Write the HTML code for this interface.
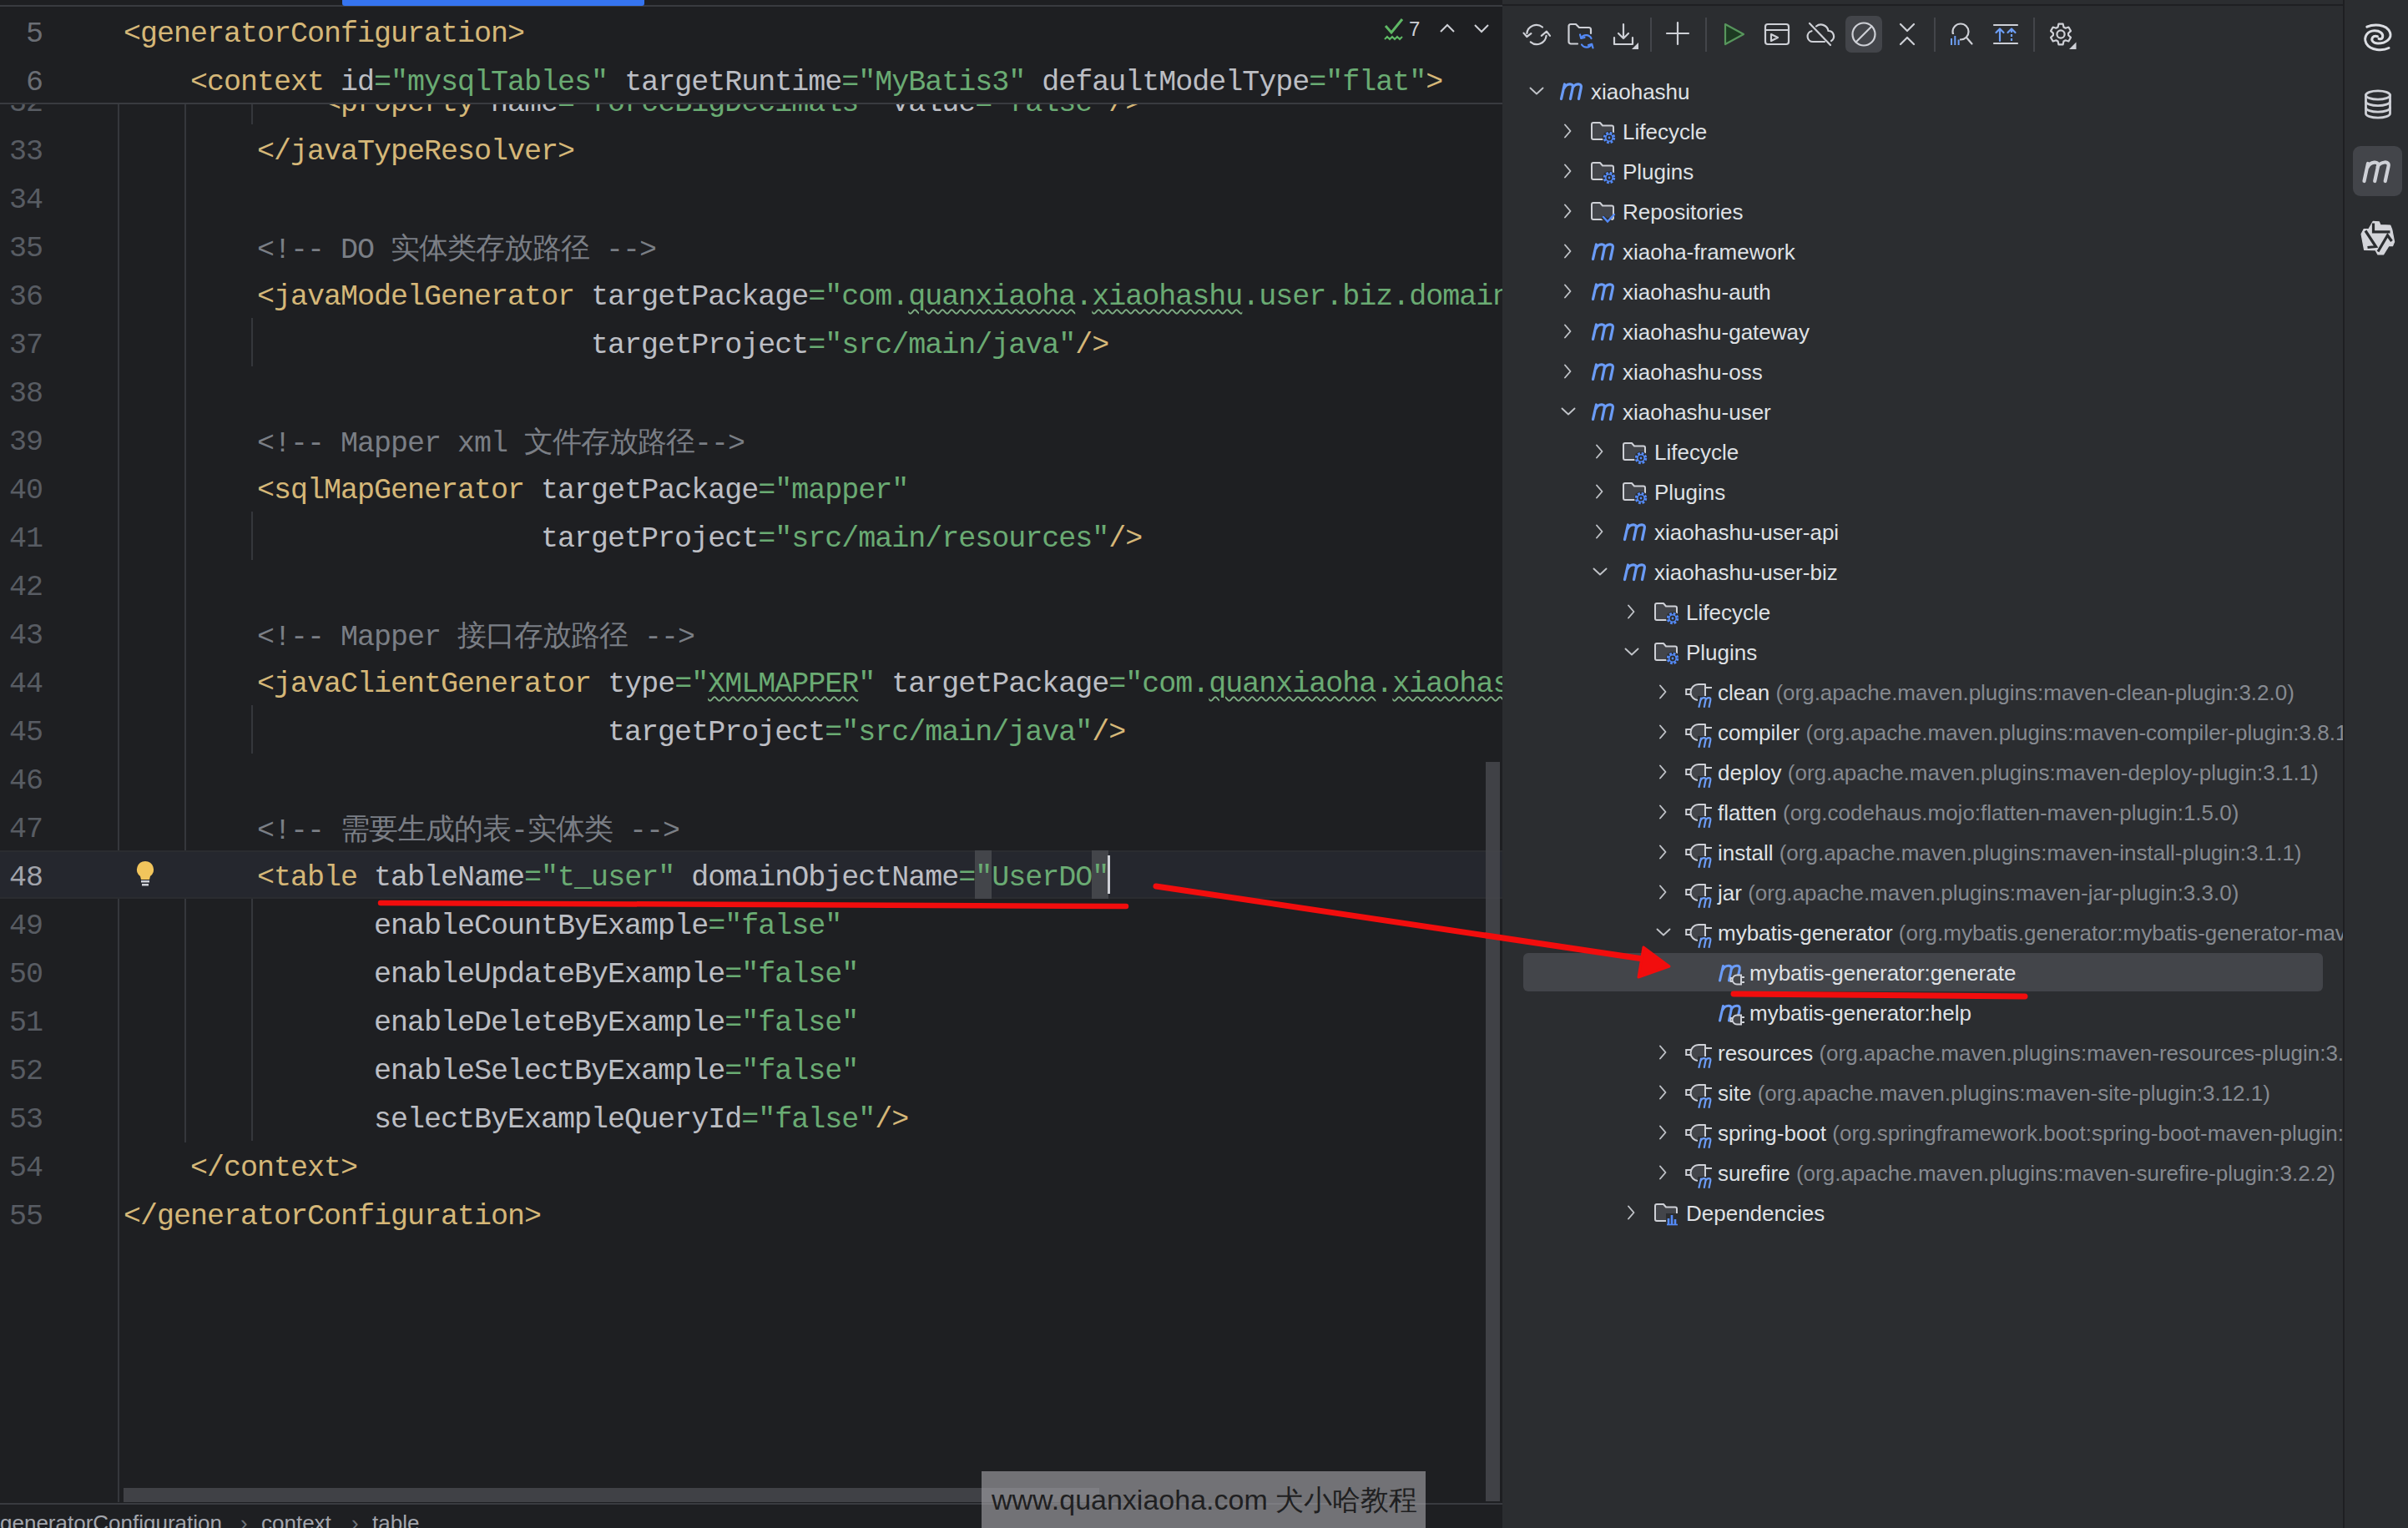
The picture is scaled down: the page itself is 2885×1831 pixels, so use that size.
<!DOCTYPE html>
<html><head><meta charset="utf-8"><style>
*{box-sizing:border-box}
html,body{margin:0;padding:0}
body{width:2885px;height:1831px;position:relative;overflow:hidden;background:#1e1f22;font-family:"Liberation Sans",sans-serif}
.abs{position:absolute}
.ln{position:absolute;left:0;width:1800px;height:58px;line-height:58px;font-family:"Liberation Mono",monospace;font-size:35px;letter-spacing:-1px;white-space:pre;color:#bcbec4}
.ln .code{position:absolute;left:148px;top:4px}
.ln .num{position:absolute;right:1749px;top:4px;color:#585c63;text-align:right}
.cjk{font-family:"Liberation Serif",serif}
.t{color:#d5b778} .a{color:#bcbec4} .v{color:#6aab73} .c{color:#7a7e85}
u{text-decoration:underline wavy #7fae84;text-decoration-thickness:1.5px;text-underline-offset:5px}
.guide{position:absolute;width:2px;background:#35373c}
.row{position:absolute;height:48px;line-height:48px;font-size:26px;color:#dfe1e5;white-space:nowrap}
.row .g{color:#868a91}
.chev{position:absolute}
</style></head>
<body>
<div class="abs" style="left:0;top:0;width:1800px;height:7px;background:#1e1f22"></div>
<div class="abs" style="left:0;top:6px;width:1800px;height:2px;background:#393b40"></div>
<div class="abs" style="left:410px;top:0;width:362px;height:7px;background:#3574f0;border-radius:0 0 3px 3px"></div>
<div class="guide" style="left:141px;top:124px;height:1676px"></div>
<div class="guide" style="left:221px;top:124px;height:1245px"></div>
<div class="guide" style="left:301px;top:124px;height:25px"></div>
<div class="guide" style="left:301px;top:381px;height:58px"></div>
<div class="guide" style="left:301px;top:613px;height:58px"></div>
<div class="guide" style="left:301px;top:845px;height:58px"></div>
<div class="guide" style="left:301px;top:1077px;height:290px"></div>
<div class="abs" style="left:0;top:1019px;width:1800px;height:58px;background:#25272e;border-top:2px solid #2a2c30;border-bottom:2px solid #2a2c30"></div>
<div class="abs" style="left:1168px;top:1019px;width:20px;height:58px;background:#43454a"></div>
<div class="abs" style="left:1308px;top:1019px;width:20px;height:58px;background:#43454a"></div>
<div class="ln" style="top:91px"><span class="num" style="color:#585c63">32</span><span class="code">            <span class="t">&lt;property</span> <span class="a">name</span><span class="v">="forceBigDecimals"</span> <span class="a">value</span><span class="v">="false"</span><span class="t">/&gt;</span></span></div>
<div class="ln" style="top:149px"><span class="num" style="color:#585c63">33</span><span class="code">        <span class="t">&lt;/javaTypeResolver</span><span class="t">&gt;</span></span></div>
<div class="ln" style="top:207px"><span class="num" style="color:#585c63">34</span><span class="code"></span></div>
<div class="ln" style="top:265px"><span class="num" style="color:#585c63">35</span><span class="code">        <span class="c">&lt;!-- DO <span class="cjk">实体类存放路径</span> --&gt;</span></span></div>
<div class="ln" style="top:323px"><span class="num" style="color:#585c63">36</span><span class="code">        <span class="t">&lt;javaModelGenerator</span> <span class="a">targetPackage</span><span class="v">="com.<u>quanxiaoha</u>.<u>xiaohashu</u>.user.biz.domain.dataobject"</span></span></div>
<div class="ln" style="top:381px"><span class="num" style="color:#585c63">37</span><span class="code">                            <span class="a">targetProject</span><span class="v">="src/main/java"</span><span class="t">/&gt;</span></span></div>
<div class="ln" style="top:439px"><span class="num" style="color:#585c63">38</span><span class="code"></span></div>
<div class="ln" style="top:497px"><span class="num" style="color:#585c63">39</span><span class="code">        <span class="c">&lt;!-- Mapper xml <span class="cjk">文件存放路径</span>--&gt;</span></span></div>
<div class="ln" style="top:555px"><span class="num" style="color:#585c63">40</span><span class="code">        <span class="t">&lt;sqlMapGenerator</span> <span class="a">targetPackage</span><span class="v">="mapper"</span></span></div>
<div class="ln" style="top:613px"><span class="num" style="color:#585c63">41</span><span class="code">                         <span class="a">targetProject</span><span class="v">="src/main/resources"</span><span class="t">/&gt;</span></span></div>
<div class="ln" style="top:671px"><span class="num" style="color:#585c63">42</span><span class="code"></span></div>
<div class="ln" style="top:729px"><span class="num" style="color:#585c63">43</span><span class="code">        <span class="c">&lt;!-- Mapper <span class="cjk">接口存放路径</span> --&gt;</span></span></div>
<div class="ln" style="top:787px"><span class="num" style="color:#585c63">44</span><span class="code">        <span class="t">&lt;javaClientGenerator</span> <span class="a">type</span><span class="v">="<u>XMLMAPPER</u>"</span> <span class="a">targetPackage</span><span class="v">="com.<u>quanxiaoha</u>.<u>xiaohashu</u>.user.biz.domain.mapper"</span></span></div>
<div class="ln" style="top:845px"><span class="num" style="color:#585c63">45</span><span class="code">                             <span class="a">targetProject</span><span class="v">="src/main/java"</span><span class="t">/&gt;</span></span></div>
<div class="ln" style="top:903px"><span class="num" style="color:#585c63">46</span><span class="code"></span></div>
<div class="ln" style="top:961px"><span class="num" style="color:#585c63">47</span><span class="code">        <span class="c">&lt;!-- <span class="cjk">需要生成的表</span>-<span class="cjk">实体类</span> --&gt;</span></span></div>
<div class="ln" style="top:1019px"><span class="num" style="color:#a1a3ab">48</span><span class="code">        <span class="t">&lt;table</span> <span class="a">tableName</span><span class="v">="t_user"</span> <span class="a">domainObjectName</span><span class="v">="UserDO"</span></span></div>
<div class="ln" style="top:1077px"><span class="num" style="color:#585c63">49</span><span class="code">               <span class="a">enableCountByExample</span><span class="v">="false"</span></span></div>
<div class="ln" style="top:1135px"><span class="num" style="color:#585c63">50</span><span class="code">               <span class="a">enableUpdateByExample</span><span class="v">="false"</span></span></div>
<div class="ln" style="top:1193px"><span class="num" style="color:#585c63">51</span><span class="code">               <span class="a">enableDeleteByExample</span><span class="v">="false"</span></span></div>
<div class="ln" style="top:1251px"><span class="num" style="color:#585c63">52</span><span class="code">               <span class="a">enableSelectByExample</span><span class="v">="false"</span></span></div>
<div class="ln" style="top:1309px"><span class="num" style="color:#585c63">53</span><span class="code">               <span class="a">selectByExampleQueryId</span><span class="v">="false"</span><span class="t">/&gt;</span></span></div>
<div class="ln" style="top:1367px"><span class="num" style="color:#585c63">54</span><span class="code">    <span class="t">&lt;/context</span><span class="t">&gt;</span></span></div>
<div class="ln" style="top:1425px"><span class="num" style="color:#585c63">55</span><span class="code"><span class="t">&lt;/generatorConfiguration</span><span class="t">&gt;</span></span></div>
<div class="abs" style="left:1327px;top:1025px;width:3px;height:46px;background:#ced0d6"></div>
<svg class="abs" style="left:162px;top:1030px" width="24" height="34" viewBox="0 0 24 34">
<path d="M12 2 a10 10 0 0 1 6 18 l-1 4 h-10 l-1 -4 a10 10 0 0 1 6 -18z" fill="#f2c55c"/>
<rect x="7" y="25" width="10" height="2.5" fill="#ced0d6"/><rect x="8" y="29" width="8" height="2.5" fill="#ced0d6"/></svg>
<div class="abs" style="left:0;top:8px;width:1800px;height:116px;background:#1e1f22"></div>
<div class="abs" style="left:0;top:123px;width:1800px;height:2px;background:#393b40"></div>
<div class="ln" style="top:8px"><span class="num" style="color:#6a6e75">5</span><span class="code"><span class="t">&lt;generatorConfiguration</span><span class="t">&gt;</span></span></div>
<div class="ln" style="top:66px"><span class="num" style="color:#6a6e75">6</span><span class="code">    <span class="t">&lt;context</span> <span class="a">id</span><span class="v">="mysqlTables"</span> <span class="a">targetRuntime</span><span class="v">="MyBatis3"</span> <span class="a">defaultModelType</span><span class="v">="flat"</span><span class="t">&gt;</span></span></div>
<svg class="abs" style="left:1655px;top:18px" width="135" height="36" viewBox="0 0 135 36">
<path d="M5 13 l7 8 l13 -16" stroke="#5fb865" stroke-width="3" fill="none"/>
<path d="M4 29 l3 -3 l3 3 l3 -3 l3 3 l3 -3 l3 3 l3 -3" stroke="#5fb865" stroke-width="2" fill="none"/>
<text x="33" y="25" font-family="Liberation Sans" font-size="24" fill="#ced0d6">7</text>
<path d="M71 20 l8 -8 l8 8" stroke="#ced0d6" stroke-width="2" fill="none"/>
<path d="M112 12 l8 8 l8 -8" stroke="#ced0d6" stroke-width="2" fill="none"/>
</svg>
<div class="abs" style="left:1780px;top:913px;width:17px;height:886px;background:#47484c;opacity:.85"></div>
<div class="abs" style="left:148px;top:1783px;width:1169px;height:17px;background:#47484c;opacity:.85"></div>
<div class="abs" style="left:0;top:1801px;width:1800px;height:2px;background:#393b40"></div>
<div class="abs" style="left:0;top:1803px;width:1800px;height:28px;background:#1e1f22"></div>
<div class="abs" style="left:0;top:1808px;font-size:26px;line-height:34px;color:#a3a6ad;white-space:nowrap">generatorConfiguration<span style="position:absolute;left:288px;color:#6f737a">›</span><span style="position:absolute;left:313px">context</span><span style="position:absolute;left:421px;color:#6f737a">›</span><span style="position:absolute;left:446px">table</span></div>
<div class="abs" style="left:1176px;top:1763px;width:532px;height:68px;background:rgba(160,160,165,0.65)"></div>
<div class="abs" style="left:1188px;top:1775px;font-size:34px;line-height:44px;color:#1f1f21;white-space:nowrap">www.quanxiaoha.com 犬小哈教程</div>
<div class="abs" style="left:1800px;top:0;width:1008px;height:1831px;background:#2b2d30"></div>
<div class="abs" style="left:1800px;top:5px;width:1008px;height:2px;background:#1e1f22"></div>
<div class="abs" style="left:2807px;top:0;width:2px;height:1831px;background:#1e1f22"></div>
<div class="abs" style="left:2809px;top:0;width:76px;height:1831px;background:#2b2d30"></div>
<svg class="abs" style="left:1825px;top:25px;overflow:visible" width="34" height="34" viewBox="0 0 34 34" >
      <path d="M23 7.5 A11.5 11.5 0 0 0 4.3 15" stroke="#ced0d6" stroke-width="2.2" fill="none" stroke-linecap="round" stroke-linejoin="round"/>
      <path d="M0.5 14.6 L4.3 19 L9.4 15.2" stroke="#ced0d6" stroke-width="2.2" fill="none" stroke-linecap="round" stroke-linejoin="round"/>
      <path d="M8.8 25.3 A11.5 11.5 0 0 0 27.6 17.8" stroke="#ced0d6" stroke-width="2.2" fill="none" stroke-linecap="round" stroke-linejoin="round"/>
      <path d="M21.8 17.8 L28 12.6 L32 17.8" stroke="#ced0d6" stroke-width="2.2" fill="none" stroke-linecap="round" stroke-linejoin="round"/></svg><svg class="abs" style="left:1878px;top:25px;overflow:visible" width="36" height="36" viewBox="0 0 36 36" >
      <path d="M12 27.5 H4 A2.5 2.5 0 0 1 1.5 25 V6.5 A2.5 2.5 0 0 1 4 4 H10 L14 8 H25.5 A2.5 2.5 0 0 1 28 10.5 V15" stroke="#ced0d6" stroke-width="2.2" fill="none" stroke-linecap="round" stroke-linejoin="round"/>
      <path d="M28.5 21 A7 7 0 0 0 16.3 20.5" stroke="#548af7" stroke-width="2.2" fill="none" stroke-linecap="round" stroke-linejoin="round"/>
      <path d="M15 16.5 L16.3 21 L20.5 20" stroke="#548af7" stroke-width="2.2" fill="none" stroke-linecap="round" stroke-linejoin="round"/>
      <path d="M17 28.5 A7 7 0 0 0 29 28" stroke="#548af7" stroke-width="2.2" fill="none" stroke-linecap="round" stroke-linejoin="round"/>
      <path d="M30.5 32.5 L29.2 27.8 L25 29" stroke="#548af7" stroke-width="2.2" fill="none" stroke-linecap="round" stroke-linejoin="round"/></svg><svg class="abs" style="left:1930px;top:25px;overflow:visible" width="36" height="36" viewBox="0 0 36 36" >
      <path d="M15 4 V21 M9 15 L15 21 L21 15" stroke="#ced0d6" stroke-width="2.2" fill="none" stroke-linecap="round" stroke-linejoin="round"/>
      <path d="M4 20 V28 H26 V20" stroke="#ced0d6" stroke-width="2.2" fill="none" stroke-linecap="round" stroke-linejoin="round"/>
      <path d="M33 26 V34 H25 Z" fill="#ced0d6"/></svg><div class="abs" style="left:1977px;top:21px;width:2px;height:41px;background:#43454a"></div><div class="abs" style="left:2043px;top:21px;width:2px;height:41px;background:#43454a"></div><div class="abs" style="left:2317px;top:21px;width:2px;height:41px;background:#43454a"></div><div class="abs" style="left:2436px;top:21px;width:2px;height:41px;background:#43454a"></div><svg class="abs" style="left:1996px;top:26px;overflow:visible" width="28" height="28" viewBox="0 0 28 28" ><path d="M14 1 V27 M1 14 H27" stroke="#ced0d6" stroke-width="2.2" fill="none" stroke-linecap="round" stroke-linejoin="round"/></svg><svg class="abs" style="left:2062px;top:25px;overflow:visible" width="32" height="32" viewBox="0 0 32 32" ><path d="M5 4 L27 16 L5 28 Z" stroke="#57965c" stroke-width="2.2" fill="#1d3a22" stroke-linejoin="round"/></svg><svg class="abs" style="left:2113px;top:26px;overflow:visible" width="32" height="30" viewBox="0 0 32 30" >
      <rect x="2" y="3" width="28" height="24" rx="3" stroke="#ced0d6" stroke-width="2.2" fill="none" stroke-linecap="round" stroke-linejoin="round"/>
      <path d="M2 10 H30" stroke="#ced0d6" stroke-width="2.2" fill="none" stroke-linecap="round" stroke-linejoin="round"/>
      <path d="M9 15 L17 19 L9 23 Z" stroke="#ced0d6" stroke-width="2.2" fill="none" stroke-linecap="round" stroke-linejoin="round"/></svg><svg class="abs" style="left:2163px;top:25px;overflow:visible" width="36" height="32" viewBox="0 0 36 32" >
      <path d="M23 25 H9 A6.5 6.5 0 0 1 7.5 12.2 M13 6.5 A9 9 0 0 1 27.5 12 A6.5 6.5 0 0 1 31 24" stroke="#ced0d6" stroke-width="2.2" fill="none" stroke-linecap="round" stroke-linejoin="round"/>
      <path d="M5 3 L30 29" stroke="#ced0d6" stroke-width="2.2" fill="none" stroke-linecap="round" stroke-linejoin="round"/></svg><div class="abs" style="left:2211px;top:19px;width:44px;height:44px;background:#43454a;border-radius:7px"></div><svg class="abs" style="left:2217px;top:25px;overflow:visible" width="32" height="32" viewBox="0 0 32 32" ><circle cx="16" cy="16" r="13.5" stroke="#ced0d6" stroke-width="2.2" fill="none" stroke-linecap="round" stroke-linejoin="round"/><path d="M25.5 6.5 L6.5 25.5" stroke="#ced0d6" stroke-width="2.2" fill="none" stroke-linecap="round" stroke-linejoin="round"/></svg><svg class="abs" style="left:2273px;top:25px;overflow:visible" width="24" height="32" viewBox="0 0 24 32" ><path d="M4 4 L12 12 L20 4 M4 28 L12 20 L20 28" stroke="#ced0d6" stroke-width="2.2" fill="none" stroke-linecap="round" stroke-linejoin="round"/></svg><svg class="abs" style="left:2333px;top:25px;overflow:visible" width="36" height="36" viewBox="0 0 36 36" >
      <circle cx="16" cy="13" r="9.5" stroke="#ced0d6" stroke-width="2.2" fill="none" stroke-linecap="round" stroke-linejoin="round"/>
      <path d="M23 20 L29.5 27.5" stroke="#ced0d6" stroke-width="2.2" fill="none" stroke-linecap="round" stroke-linejoin="round"/>
      <rect x="2" y="16" width="13" height="15" fill="#2b2d30"/>
      <path d="M5 21 V29 M9.3 18 V29 M13.6 22.5 V29" stroke="#6d9ef6" stroke-width="2" fill="none"/></svg><svg class="abs" style="left:2386px;top:25px;overflow:visible" width="36" height="32" viewBox="0 0 36 32" >
      <path d="M3 5 H31 M3 27 H31" stroke="#ced0d6" stroke-width="2.2" fill="none" stroke-linecap="round" stroke-linejoin="round"/>
      <path d="M10 24 V10 M5.5 14 L10 9.5 L14.5 14" stroke="#6d9ef6" stroke-width="2.2" fill="none" stroke-linecap="round" stroke-linejoin="round"/>
      <path d="M24 24 V10" stroke="#6d9ef6" stroke-width="2.2" stroke-dasharray="3 2"/>
      <path d="M19.5 14 L24 9.5 L28.5 14" stroke="#6d9ef6" stroke-width="2.2" fill="none" stroke-linecap="round" stroke-linejoin="round"/></svg><svg class="abs" style="left:2453px;top:25px;overflow:visible" width="40" height="36" viewBox="0 0 40 36" >
      <path d="M13.38 3.68 L18.62 3.68 L19.45 7.47 L21.66 8.75 L25.36 7.57 L27.98 12.11 L25.11 14.72 L25.11 17.28 L27.98 19.89 L25.36 24.43 L21.66 23.25 L19.45 24.53 L18.62 28.32 L13.38 28.32 L12.55 24.53 L10.34 23.25 L6.64 24.43 L4.02 19.89 L6.89 17.28 L6.89 14.72 L4.02 12.11 L6.64 7.57 L10.34 8.75 L12.55 7.47 Z" stroke="#ced0d6" stroke-width="2.2" fill="none" stroke-linecap="round" stroke-linejoin="round"/>
      <circle cx="16" cy="16" r="4.6" stroke="#ced0d6" stroke-width="2.2" fill="none" stroke-linecap="round" stroke-linejoin="round"/>
      <path d="M34.5 25.5 V34 H26 Z" fill="#ced0d6"/></svg><div class="abs" style="left:1825px;top:1142px;width:958px;height:46px;background:#43454a;border-radius:6px"></div><div class="abs" style="left:1800px;top:70px;width:1007px;height:1761px;overflow:hidden"><div style="position:absolute;left:-1800px;top:-70px;width:2885px;height:1831px"><svg class="abs" style="left:1832px;top:103px;overflow:visible" width="18" height="12" viewBox="0 0 18 12" ><path d="M1.5 2.5 L9 9.5 L16.5 2.5" stroke="#c0c3c8" stroke-width="1.9" fill="none" stroke-linecap="round" stroke-linejoin="round"/></svg><svg class="abs" style="left:1868px;top:98px;overflow:visible" width="32" height="22" viewBox="0 0 32 22" ><path d="M2.5 20.5 L6.5 3 M6 7.5 C8.5 2 18 0.5 16.2 7.5 L13.5 20.5 M16 7.5 C18.5 2 28 0.5 26.2 7.5 L23.5 20.5" stroke="#6a9bf6" stroke-width="3.3" fill="none" stroke-linecap="round"/></svg><svg class="abs" style="left:1872px;top:148px;overflow:visible" width="12" height="18" viewBox="0 0 12 18" ><path d="M3 1.5 L9.5 9 L3 16.5" stroke="#c0c3c8" stroke-width="1.9" fill="none" stroke-linecap="round" stroke-linejoin="round"/></svg><svg class="abs" style="left:1906px;top:145px;overflow:visible" width="30" height="28" viewBox="0 0 30 28" ><path d="M3 2 H11 L14 5.5 H25 A2 2 0 0 1 27 7.5 V20 A2 2 0 0 1 25 22 H3 A2 2 0 0 1 1 20 V4 A2 2 0 0 1 3 2 Z" stroke="#ced0d6" stroke-width="2" fill="#43454a" stroke-linejoin="round"/><circle cx="22" cy="20" r="8" fill="#2b2d30"/><circle cx="22" cy="20" r="5.6" stroke="#548af7" stroke-width="3.2" fill="none" stroke-dasharray="2.6 1.8"/><circle cx="22" cy="20" r="4.2" stroke="#548af7" stroke-width="1.6" fill="#2b2d30"/><circle cx="22" cy="20" r="1.4" fill="#548af7"/></svg><svg class="abs" style="left:1872px;top:196px;overflow:visible" width="12" height="18" viewBox="0 0 12 18" ><path d="M3 1.5 L9.5 9 L3 16.5" stroke="#c0c3c8" stroke-width="1.9" fill="none" stroke-linecap="round" stroke-linejoin="round"/></svg><svg class="abs" style="left:1906px;top:193px;overflow:visible" width="30" height="28" viewBox="0 0 30 28" ><path d="M3 2 H11 L14 5.5 H25 A2 2 0 0 1 27 7.5 V20 A2 2 0 0 1 25 22 H3 A2 2 0 0 1 1 20 V4 A2 2 0 0 1 3 2 Z" stroke="#ced0d6" stroke-width="2" fill="#43454a" stroke-linejoin="round"/><circle cx="22" cy="20" r="8" fill="#2b2d30"/><circle cx="22" cy="20" r="5.6" stroke="#548af7" stroke-width="3.2" fill="none" stroke-dasharray="2.6 1.8"/><circle cx="22" cy="20" r="4.2" stroke="#548af7" stroke-width="1.6" fill="#2b2d30"/><circle cx="22" cy="20" r="1.4" fill="#548af7"/></svg><svg class="abs" style="left:1872px;top:244px;overflow:visible" width="12" height="18" viewBox="0 0 12 18" ><path d="M3 1.5 L9.5 9 L3 16.5" stroke="#c0c3c8" stroke-width="1.9" fill="none" stroke-linecap="round" stroke-linejoin="round"/></svg><svg class="abs" style="left:1906px;top:241px;overflow:visible" width="30" height="28" viewBox="0 0 30 28" ><path d="M3 2 H11 L14 5.5 H25 A2 2 0 0 1 27 7.5 V20 A2 2 0 0 1 25 22 H3 A2 2 0 0 1 1 20 V4 A2 2 0 0 1 3 2 Z" stroke="#ced0d6" stroke-width="2" fill="#43454a" stroke-linejoin="round"/><path d="M14 19 L20 24 L23 21" stroke="#2b2d30" stroke-width="5" fill="none"/><path d="M15 19 L20 24.5 L28 16" stroke="#548af7" stroke-width="2.4" fill="none" stroke-linecap="round"/></svg><svg class="abs" style="left:1872px;top:292px;overflow:visible" width="12" height="18" viewBox="0 0 12 18" ><path d="M3 1.5 L9.5 9 L3 16.5" stroke="#c0c3c8" stroke-width="1.9" fill="none" stroke-linecap="round" stroke-linejoin="round"/></svg><svg class="abs" style="left:1906px;top:290px;overflow:visible" width="32" height="22" viewBox="0 0 32 22" ><path d="M2.5 20.5 L6.5 3 M6 7.5 C8.5 2 18 0.5 16.2 7.5 L13.5 20.5 M16 7.5 C18.5 2 28 0.5 26.2 7.5 L23.5 20.5" stroke="#6a9bf6" stroke-width="3.3" fill="none" stroke-linecap="round"/></svg><svg class="abs" style="left:1872px;top:340px;overflow:visible" width="12" height="18" viewBox="0 0 12 18" ><path d="M3 1.5 L9.5 9 L3 16.5" stroke="#c0c3c8" stroke-width="1.9" fill="none" stroke-linecap="round" stroke-linejoin="round"/></svg><svg class="abs" style="left:1906px;top:338px;overflow:visible" width="32" height="22" viewBox="0 0 32 22" ><path d="M2.5 20.5 L6.5 3 M6 7.5 C8.5 2 18 0.5 16.2 7.5 L13.5 20.5 M16 7.5 C18.5 2 28 0.5 26.2 7.5 L23.5 20.5" stroke="#6a9bf6" stroke-width="3.3" fill="none" stroke-linecap="round"/></svg><svg class="abs" style="left:1872px;top:388px;overflow:visible" width="12" height="18" viewBox="0 0 12 18" ><path d="M3 1.5 L9.5 9 L3 16.5" stroke="#c0c3c8" stroke-width="1.9" fill="none" stroke-linecap="round" stroke-linejoin="round"/></svg><svg class="abs" style="left:1906px;top:386px;overflow:visible" width="32" height="22" viewBox="0 0 32 22" ><path d="M2.5 20.5 L6.5 3 M6 7.5 C8.5 2 18 0.5 16.2 7.5 L13.5 20.5 M16 7.5 C18.5 2 28 0.5 26.2 7.5 L23.5 20.5" stroke="#6a9bf6" stroke-width="3.3" fill="none" stroke-linecap="round"/></svg><svg class="abs" style="left:1872px;top:436px;overflow:visible" width="12" height="18" viewBox="0 0 12 18" ><path d="M3 1.5 L9.5 9 L3 16.5" stroke="#c0c3c8" stroke-width="1.9" fill="none" stroke-linecap="round" stroke-linejoin="round"/></svg><svg class="abs" style="left:1906px;top:434px;overflow:visible" width="32" height="22" viewBox="0 0 32 22" ><path d="M2.5 20.5 L6.5 3 M6 7.5 C8.5 2 18 0.5 16.2 7.5 L13.5 20.5 M16 7.5 C18.5 2 28 0.5 26.2 7.5 L23.5 20.5" stroke="#6a9bf6" stroke-width="3.3" fill="none" stroke-linecap="round"/></svg><svg class="abs" style="left:1870px;top:487px;overflow:visible" width="18" height="12" viewBox="0 0 18 12" ><path d="M1.5 2.5 L9 9.5 L16.5 2.5" stroke="#c0c3c8" stroke-width="1.9" fill="none" stroke-linecap="round" stroke-linejoin="round"/></svg><svg class="abs" style="left:1906px;top:482px;overflow:visible" width="32" height="22" viewBox="0 0 32 22" ><path d="M2.5 20.5 L6.5 3 M6 7.5 C8.5 2 18 0.5 16.2 7.5 L13.5 20.5 M16 7.5 C18.5 2 28 0.5 26.2 7.5 L23.5 20.5" stroke="#6a9bf6" stroke-width="3.3" fill="none" stroke-linecap="round"/></svg><svg class="abs" style="left:1910px;top:532px;overflow:visible" width="12" height="18" viewBox="0 0 12 18" ><path d="M3 1.5 L9.5 9 L3 16.5" stroke="#c0c3c8" stroke-width="1.9" fill="none" stroke-linecap="round" stroke-linejoin="round"/></svg><svg class="abs" style="left:1944px;top:529px;overflow:visible" width="30" height="28" viewBox="0 0 30 28" ><path d="M3 2 H11 L14 5.5 H25 A2 2 0 0 1 27 7.5 V20 A2 2 0 0 1 25 22 H3 A2 2 0 0 1 1 20 V4 A2 2 0 0 1 3 2 Z" stroke="#ced0d6" stroke-width="2" fill="#43454a" stroke-linejoin="round"/><circle cx="22" cy="20" r="8" fill="#2b2d30"/><circle cx="22" cy="20" r="5.6" stroke="#548af7" stroke-width="3.2" fill="none" stroke-dasharray="2.6 1.8"/><circle cx="22" cy="20" r="4.2" stroke="#548af7" stroke-width="1.6" fill="#2b2d30"/><circle cx="22" cy="20" r="1.4" fill="#548af7"/></svg><svg class="abs" style="left:1910px;top:580px;overflow:visible" width="12" height="18" viewBox="0 0 12 18" ><path d="M3 1.5 L9.5 9 L3 16.5" stroke="#c0c3c8" stroke-width="1.9" fill="none" stroke-linecap="round" stroke-linejoin="round"/></svg><svg class="abs" style="left:1944px;top:577px;overflow:visible" width="30" height="28" viewBox="0 0 30 28" ><path d="M3 2 H11 L14 5.5 H25 A2 2 0 0 1 27 7.5 V20 A2 2 0 0 1 25 22 H3 A2 2 0 0 1 1 20 V4 A2 2 0 0 1 3 2 Z" stroke="#ced0d6" stroke-width="2" fill="#43454a" stroke-linejoin="round"/><circle cx="22" cy="20" r="8" fill="#2b2d30"/><circle cx="22" cy="20" r="5.6" stroke="#548af7" stroke-width="3.2" fill="none" stroke-dasharray="2.6 1.8"/><circle cx="22" cy="20" r="4.2" stroke="#548af7" stroke-width="1.6" fill="#2b2d30"/><circle cx="22" cy="20" r="1.4" fill="#548af7"/></svg><svg class="abs" style="left:1910px;top:628px;overflow:visible" width="12" height="18" viewBox="0 0 12 18" ><path d="M3 1.5 L9.5 9 L3 16.5" stroke="#c0c3c8" stroke-width="1.9" fill="none" stroke-linecap="round" stroke-linejoin="round"/></svg><svg class="abs" style="left:1944px;top:626px;overflow:visible" width="32" height="22" viewBox="0 0 32 22" ><path d="M2.5 20.5 L6.5 3 M6 7.5 C8.5 2 18 0.5 16.2 7.5 L13.5 20.5 M16 7.5 C18.5 2 28 0.5 26.2 7.5 L23.5 20.5" stroke="#6a9bf6" stroke-width="3.3" fill="none" stroke-linecap="round"/></svg><svg class="abs" style="left:1908px;top:679px;overflow:visible" width="18" height="12" viewBox="0 0 18 12" ><path d="M1.5 2.5 L9 9.5 L16.5 2.5" stroke="#c0c3c8" stroke-width="1.9" fill="none" stroke-linecap="round" stroke-linejoin="round"/></svg><svg class="abs" style="left:1944px;top:674px;overflow:visible" width="32" height="22" viewBox="0 0 32 22" ><path d="M2.5 20.5 L6.5 3 M6 7.5 C8.5 2 18 0.5 16.2 7.5 L13.5 20.5 M16 7.5 C18.5 2 28 0.5 26.2 7.5 L23.5 20.5" stroke="#6a9bf6" stroke-width="3.3" fill="none" stroke-linecap="round"/></svg><svg class="abs" style="left:1948px;top:724px;overflow:visible" width="12" height="18" viewBox="0 0 12 18" ><path d="M3 1.5 L9.5 9 L3 16.5" stroke="#c0c3c8" stroke-width="1.9" fill="none" stroke-linecap="round" stroke-linejoin="round"/></svg><svg class="abs" style="left:1982px;top:721px;overflow:visible" width="30" height="28" viewBox="0 0 30 28" ><path d="M3 2 H11 L14 5.5 H25 A2 2 0 0 1 27 7.5 V20 A2 2 0 0 1 25 22 H3 A2 2 0 0 1 1 20 V4 A2 2 0 0 1 3 2 Z" stroke="#ced0d6" stroke-width="2" fill="#43454a" stroke-linejoin="round"/><circle cx="22" cy="20" r="8" fill="#2b2d30"/><circle cx="22" cy="20" r="5.6" stroke="#548af7" stroke-width="3.2" fill="none" stroke-dasharray="2.6 1.8"/><circle cx="22" cy="20" r="4.2" stroke="#548af7" stroke-width="1.6" fill="#2b2d30"/><circle cx="22" cy="20" r="1.4" fill="#548af7"/></svg><svg class="abs" style="left:1946px;top:775px;overflow:visible" width="18" height="12" viewBox="0 0 18 12" ><path d="M1.5 2.5 L9 9.5 L16.5 2.5" stroke="#c0c3c8" stroke-width="1.9" fill="none" stroke-linecap="round" stroke-linejoin="round"/></svg><svg class="abs" style="left:1982px;top:769px;overflow:visible" width="30" height="28" viewBox="0 0 30 28" ><path d="M3 2 H11 L14 5.5 H25 A2 2 0 0 1 27 7.5 V20 A2 2 0 0 1 25 22 H3 A2 2 0 0 1 1 20 V4 A2 2 0 0 1 3 2 Z" stroke="#ced0d6" stroke-width="2" fill="#43454a" stroke-linejoin="round"/><circle cx="22" cy="20" r="8" fill="#2b2d30"/><circle cx="22" cy="20" r="5.6" stroke="#548af7" stroke-width="3.2" fill="none" stroke-dasharray="2.6 1.8"/><circle cx="22" cy="20" r="4.2" stroke="#548af7" stroke-width="1.6" fill="#2b2d30"/><circle cx="22" cy="20" r="1.4" fill="#548af7"/></svg><svg class="abs" style="left:1986px;top:820px;overflow:visible" width="12" height="18" viewBox="0 0 12 18" ><path d="M3 1.5 L9.5 9 L3 16.5" stroke="#c0c3c8" stroke-width="1.9" fill="none" stroke-linecap="round" stroke-linejoin="round"/></svg><svg class="abs" style="left:2019px;top:819px;overflow:visible" width="34" height="30" viewBox="0 0 34 30" ><path d="M7 7 H1.2 V13 H7" stroke="#ced0d6" stroke-width="2" fill="none"/>
    <path d="M24 1 H16 A9.5 9.5 0 0 0 16 20 H24 Z" stroke="#ced0d6" stroke-width="2" fill="#43454a" stroke-linejoin="round"/>
    <path d="M24 5 H32" stroke="#ced0d6" stroke-width="2"/>
    <rect x="15" y="15" width="18" height="14" fill="#2b2d30"/>
    <path d="M16.5 28 L19 17.5 M18.6 20 C20.2 16.5 25.5 16 24.5 20 L22.8 28 M24.3 20 C26 16.5 31.3 16 30.3 20 L28.6 28" stroke="#6a9bf6" stroke-width="2.2" fill="none" stroke-linecap="round"/></svg><svg class="abs" style="left:1986px;top:868px;overflow:visible" width="12" height="18" viewBox="0 0 12 18" ><path d="M3 1.5 L9.5 9 L3 16.5" stroke="#c0c3c8" stroke-width="1.9" fill="none" stroke-linecap="round" stroke-linejoin="round"/></svg><svg class="abs" style="left:2019px;top:867px;overflow:visible" width="34" height="30" viewBox="0 0 34 30" ><path d="M7 7 H1.2 V13 H7" stroke="#ced0d6" stroke-width="2" fill="none"/>
    <path d="M24 1 H16 A9.5 9.5 0 0 0 16 20 H24 Z" stroke="#ced0d6" stroke-width="2" fill="#43454a" stroke-linejoin="round"/>
    <path d="M24 5 H32" stroke="#ced0d6" stroke-width="2"/>
    <rect x="15" y="15" width="18" height="14" fill="#2b2d30"/>
    <path d="M16.5 28 L19 17.5 M18.6 20 C20.2 16.5 25.5 16 24.5 20 L22.8 28 M24.3 20 C26 16.5 31.3 16 30.3 20 L28.6 28" stroke="#6a9bf6" stroke-width="2.2" fill="none" stroke-linecap="round"/></svg><svg class="abs" style="left:1986px;top:916px;overflow:visible" width="12" height="18" viewBox="0 0 12 18" ><path d="M3 1.5 L9.5 9 L3 16.5" stroke="#c0c3c8" stroke-width="1.9" fill="none" stroke-linecap="round" stroke-linejoin="round"/></svg><svg class="abs" style="left:2019px;top:915px;overflow:visible" width="34" height="30" viewBox="0 0 34 30" ><path d="M7 7 H1.2 V13 H7" stroke="#ced0d6" stroke-width="2" fill="none"/>
    <path d="M24 1 H16 A9.5 9.5 0 0 0 16 20 H24 Z" stroke="#ced0d6" stroke-width="2" fill="#43454a" stroke-linejoin="round"/>
    <path d="M24 5 H32" stroke="#ced0d6" stroke-width="2"/>
    <rect x="15" y="15" width="18" height="14" fill="#2b2d30"/>
    <path d="M16.5 28 L19 17.5 M18.6 20 C20.2 16.5 25.5 16 24.5 20 L22.8 28 M24.3 20 C26 16.5 31.3 16 30.3 20 L28.6 28" stroke="#6a9bf6" stroke-width="2.2" fill="none" stroke-linecap="round"/></svg><svg class="abs" style="left:1986px;top:964px;overflow:visible" width="12" height="18" viewBox="0 0 12 18" ><path d="M3 1.5 L9.5 9 L3 16.5" stroke="#c0c3c8" stroke-width="1.9" fill="none" stroke-linecap="round" stroke-linejoin="round"/></svg><svg class="abs" style="left:2019px;top:963px;overflow:visible" width="34" height="30" viewBox="0 0 34 30" ><path d="M7 7 H1.2 V13 H7" stroke="#ced0d6" stroke-width="2" fill="none"/>
    <path d="M24 1 H16 A9.5 9.5 0 0 0 16 20 H24 Z" stroke="#ced0d6" stroke-width="2" fill="#43454a" stroke-linejoin="round"/>
    <path d="M24 5 H32" stroke="#ced0d6" stroke-width="2"/>
    <rect x="15" y="15" width="18" height="14" fill="#2b2d30"/>
    <path d="M16.5 28 L19 17.5 M18.6 20 C20.2 16.5 25.5 16 24.5 20 L22.8 28 M24.3 20 C26 16.5 31.3 16 30.3 20 L28.6 28" stroke="#6a9bf6" stroke-width="2.2" fill="none" stroke-linecap="round"/></svg><svg class="abs" style="left:1986px;top:1012px;overflow:visible" width="12" height="18" viewBox="0 0 12 18" ><path d="M3 1.5 L9.5 9 L3 16.5" stroke="#c0c3c8" stroke-width="1.9" fill="none" stroke-linecap="round" stroke-linejoin="round"/></svg><svg class="abs" style="left:2019px;top:1011px;overflow:visible" width="34" height="30" viewBox="0 0 34 30" ><path d="M7 7 H1.2 V13 H7" stroke="#ced0d6" stroke-width="2" fill="none"/>
    <path d="M24 1 H16 A9.5 9.5 0 0 0 16 20 H24 Z" stroke="#ced0d6" stroke-width="2" fill="#43454a" stroke-linejoin="round"/>
    <path d="M24 5 H32" stroke="#ced0d6" stroke-width="2"/>
    <rect x="15" y="15" width="18" height="14" fill="#2b2d30"/>
    <path d="M16.5 28 L19 17.5 M18.6 20 C20.2 16.5 25.5 16 24.5 20 L22.8 28 M24.3 20 C26 16.5 31.3 16 30.3 20 L28.6 28" stroke="#6a9bf6" stroke-width="2.2" fill="none" stroke-linecap="round"/></svg><svg class="abs" style="left:1986px;top:1060px;overflow:visible" width="12" height="18" viewBox="0 0 12 18" ><path d="M3 1.5 L9.5 9 L3 16.5" stroke="#c0c3c8" stroke-width="1.9" fill="none" stroke-linecap="round" stroke-linejoin="round"/></svg><svg class="abs" style="left:2019px;top:1059px;overflow:visible" width="34" height="30" viewBox="0 0 34 30" ><path d="M7 7 H1.2 V13 H7" stroke="#ced0d6" stroke-width="2" fill="none"/>
    <path d="M24 1 H16 A9.5 9.5 0 0 0 16 20 H24 Z" stroke="#ced0d6" stroke-width="2" fill="#43454a" stroke-linejoin="round"/>
    <path d="M24 5 H32" stroke="#ced0d6" stroke-width="2"/>
    <rect x="15" y="15" width="18" height="14" fill="#2b2d30"/>
    <path d="M16.5 28 L19 17.5 M18.6 20 C20.2 16.5 25.5 16 24.5 20 L22.8 28 M24.3 20 C26 16.5 31.3 16 30.3 20 L28.6 28" stroke="#6a9bf6" stroke-width="2.2" fill="none" stroke-linecap="round"/></svg><svg class="abs" style="left:1984px;top:1111px;overflow:visible" width="18" height="12" viewBox="0 0 18 12" ><path d="M1.5 2.5 L9 9.5 L16.5 2.5" stroke="#c0c3c8" stroke-width="1.9" fill="none" stroke-linecap="round" stroke-linejoin="round"/></svg><svg class="abs" style="left:2019px;top:1107px;overflow:visible" width="34" height="30" viewBox="0 0 34 30" ><path d="M7 7 H1.2 V13 H7" stroke="#ced0d6" stroke-width="2" fill="none"/>
    <path d="M24 1 H16 A9.5 9.5 0 0 0 16 20 H24 Z" stroke="#ced0d6" stroke-width="2" fill="#43454a" stroke-linejoin="round"/>
    <path d="M24 5 H32" stroke="#ced0d6" stroke-width="2"/>
    <rect x="15" y="15" width="18" height="14" fill="#2b2d30"/>
    <path d="M16.5 28 L19 17.5 M18.6 20 C20.2 16.5 25.5 16 24.5 20 L22.8 28 M24.3 20 C26 16.5 31.3 16 30.3 20 L28.6 28" stroke="#6a9bf6" stroke-width="2.2" fill="none" stroke-linecap="round"/></svg><svg class="abs" style="left:2058px;top:1155px;overflow:visible" width="34" height="28" viewBox="0 0 34 28" ><path d="M2.5 20 L6.5 2.5 M6 7 C8.5 1.5 18 0 16.2 7 L13.5 20 M16 7 C18.5 1.5 28 0 26.2 7 L24 16" stroke="#6a9bf6" stroke-width="3.1" fill="none" stroke-linecap="round"/>
        <path d="M28 13.5 H23 A5.5 5.5 0 0 0 23 24.5 H28 Z" stroke="#ced0d6" stroke-width="2" fill="#43454a"/>
    <path d="M18 17 H15.5 V21 H18 M28 16 H32 M28 22 H32" stroke="#ced0d6" stroke-width="1.8" fill="none"/></svg><svg class="abs" style="left:2058px;top:1203px;overflow:visible" width="34" height="28" viewBox="0 0 34 28" ><path d="M2.5 20 L6.5 2.5 M6 7 C8.5 1.5 18 0 16.2 7 L13.5 20 M16 7 C18.5 1.5 28 0 26.2 7 L24 16" stroke="#6a9bf6" stroke-width="3.1" fill="none" stroke-linecap="round"/>
        <path d="M28 13.5 H23 A5.5 5.5 0 0 0 23 24.5 H28 Z" stroke="#ced0d6" stroke-width="2" fill="#43454a"/>
    <path d="M18 17 H15.5 V21 H18 M28 16 H32 M28 22 H32" stroke="#ced0d6" stroke-width="1.8" fill="none"/></svg><svg class="abs" style="left:1986px;top:1252px;overflow:visible" width="12" height="18" viewBox="0 0 12 18" ><path d="M3 1.5 L9.5 9 L3 16.5" stroke="#c0c3c8" stroke-width="1.9" fill="none" stroke-linecap="round" stroke-linejoin="round"/></svg><svg class="abs" style="left:2019px;top:1251px;overflow:visible" width="34" height="30" viewBox="0 0 34 30" ><path d="M7 7 H1.2 V13 H7" stroke="#ced0d6" stroke-width="2" fill="none"/>
    <path d="M24 1 H16 A9.5 9.5 0 0 0 16 20 H24 Z" stroke="#ced0d6" stroke-width="2" fill="#43454a" stroke-linejoin="round"/>
    <path d="M24 5 H32" stroke="#ced0d6" stroke-width="2"/>
    <rect x="15" y="15" width="18" height="14" fill="#2b2d30"/>
    <path d="M16.5 28 L19 17.5 M18.6 20 C20.2 16.5 25.5 16 24.5 20 L22.8 28 M24.3 20 C26 16.5 31.3 16 30.3 20 L28.6 28" stroke="#6a9bf6" stroke-width="2.2" fill="none" stroke-linecap="round"/></svg><svg class="abs" style="left:1986px;top:1300px;overflow:visible" width="12" height="18" viewBox="0 0 12 18" ><path d="M3 1.5 L9.5 9 L3 16.5" stroke="#c0c3c8" stroke-width="1.9" fill="none" stroke-linecap="round" stroke-linejoin="round"/></svg><svg class="abs" style="left:2019px;top:1299px;overflow:visible" width="34" height="30" viewBox="0 0 34 30" ><path d="M7 7 H1.2 V13 H7" stroke="#ced0d6" stroke-width="2" fill="none"/>
    <path d="M24 1 H16 A9.5 9.5 0 0 0 16 20 H24 Z" stroke="#ced0d6" stroke-width="2" fill="#43454a" stroke-linejoin="round"/>
    <path d="M24 5 H32" stroke="#ced0d6" stroke-width="2"/>
    <rect x="15" y="15" width="18" height="14" fill="#2b2d30"/>
    <path d="M16.5 28 L19 17.5 M18.6 20 C20.2 16.5 25.5 16 24.5 20 L22.8 28 M24.3 20 C26 16.5 31.3 16 30.3 20 L28.6 28" stroke="#6a9bf6" stroke-width="2.2" fill="none" stroke-linecap="round"/></svg><svg class="abs" style="left:1986px;top:1348px;overflow:visible" width="12" height="18" viewBox="0 0 12 18" ><path d="M3 1.5 L9.5 9 L3 16.5" stroke="#c0c3c8" stroke-width="1.9" fill="none" stroke-linecap="round" stroke-linejoin="round"/></svg><svg class="abs" style="left:2019px;top:1347px;overflow:visible" width="34" height="30" viewBox="0 0 34 30" ><path d="M7 7 H1.2 V13 H7" stroke="#ced0d6" stroke-width="2" fill="none"/>
    <path d="M24 1 H16 A9.5 9.5 0 0 0 16 20 H24 Z" stroke="#ced0d6" stroke-width="2" fill="#43454a" stroke-linejoin="round"/>
    <path d="M24 5 H32" stroke="#ced0d6" stroke-width="2"/>
    <rect x="15" y="15" width="18" height="14" fill="#2b2d30"/>
    <path d="M16.5 28 L19 17.5 M18.6 20 C20.2 16.5 25.5 16 24.5 20 L22.8 28 M24.3 20 C26 16.5 31.3 16 30.3 20 L28.6 28" stroke="#6a9bf6" stroke-width="2.2" fill="none" stroke-linecap="round"/></svg><svg class="abs" style="left:1986px;top:1396px;overflow:visible" width="12" height="18" viewBox="0 0 12 18" ><path d="M3 1.5 L9.5 9 L3 16.5" stroke="#c0c3c8" stroke-width="1.9" fill="none" stroke-linecap="round" stroke-linejoin="round"/></svg><svg class="abs" style="left:2019px;top:1395px;overflow:visible" width="34" height="30" viewBox="0 0 34 30" ><path d="M7 7 H1.2 V13 H7" stroke="#ced0d6" stroke-width="2" fill="none"/>
    <path d="M24 1 H16 A9.5 9.5 0 0 0 16 20 H24 Z" stroke="#ced0d6" stroke-width="2" fill="#43454a" stroke-linejoin="round"/>
    <path d="M24 5 H32" stroke="#ced0d6" stroke-width="2"/>
    <rect x="15" y="15" width="18" height="14" fill="#2b2d30"/>
    <path d="M16.5 28 L19 17.5 M18.6 20 C20.2 16.5 25.5 16 24.5 20 L22.8 28 M24.3 20 C26 16.5 31.3 16 30.3 20 L28.6 28" stroke="#6a9bf6" stroke-width="2.2" fill="none" stroke-linecap="round"/></svg><svg class="abs" style="left:1948px;top:1444px;overflow:visible" width="12" height="18" viewBox="0 0 12 18" ><path d="M3 1.5 L9.5 9 L3 16.5" stroke="#c0c3c8" stroke-width="1.9" fill="none" stroke-linecap="round" stroke-linejoin="round"/></svg><svg class="abs" style="left:1982px;top:1441px;overflow:visible" width="30" height="28" viewBox="0 0 30 28" ><path d="M3 2 H11 L14 5.5 H25 A2 2 0 0 1 27 7.5 V20 A2 2 0 0 1 25 22 H3 A2 2 0 0 1 1 20 V4 A2 2 0 0 1 3 2 Z" stroke="#ced0d6" stroke-width="2" fill="#43454a" stroke-linejoin="round"/><rect x="14" y="13" width="15" height="14" fill="#2b2d30"/><path d="M17 26 V19 M21 26 V15 M25 26 V20" stroke="#548af7" stroke-width="2.6"/><path d="M15 26.5 H28" stroke="#548af7" stroke-width="1.6"/></svg><div class="row" style="left:1906px;top:86px">xiaohashu</div><div class="row" style="left:1944px;top:134px">Lifecycle</div><div class="row" style="left:1944px;top:182px">Plugins</div><div class="row" style="left:1944px;top:230px">Repositories</div><div class="row" style="left:1944px;top:278px">xiaoha-framework</div><div class="row" style="left:1944px;top:326px">xiaohashu-auth</div><div class="row" style="left:1944px;top:374px">xiaohashu-gateway</div><div class="row" style="left:1944px;top:422px">xiaohashu-oss</div><div class="row" style="left:1944px;top:470px">xiaohashu-user</div><div class="row" style="left:1982px;top:518px">Lifecycle</div><div class="row" style="left:1982px;top:566px">Plugins</div><div class="row" style="left:1982px;top:614px">xiaohashu-user-api</div><div class="row" style="left:1982px;top:662px">xiaohashu-user-biz</div><div class="row" style="left:2020px;top:710px">Lifecycle</div><div class="row" style="left:2020px;top:758px">Plugins</div><div class="row" style="left:2058px;top:806px">clean <span class="g">(org.apache.maven.plugins:maven-clean-plugin:3.2.0)</span></div><div class="row" style="left:2058px;top:854px">compiler <span class="g">(org.apache.maven.plugins:maven-compiler-plugin:3.8.1)</span></div><div class="row" style="left:2058px;top:902px">deploy <span class="g">(org.apache.maven.plugins:maven-deploy-plugin:3.1.1)</span></div><div class="row" style="left:2058px;top:950px">flatten <span class="g">(org.codehaus.mojo:flatten-maven-plugin:1.5.0)</span></div><div class="row" style="left:2058px;top:998px">install <span class="g">(org.apache.maven.plugins:maven-install-plugin:3.1.1)</span></div><div class="row" style="left:2058px;top:1046px">jar <span class="g">(org.apache.maven.plugins:maven-jar-plugin:3.3.0)</span></div><div class="row" style="left:2058px;top:1094px">mybatis-generator <span class="g">(org.mybatis.generator:mybatis-generator-maven-plugin:1.3.7)</span></div><div class="row" style="left:2096px;top:1142px">mybatis-generator:generate</div><div class="row" style="left:2096px;top:1190px">mybatis-generator:help</div><div class="row" style="left:2058px;top:1238px">resources <span class="g">(org.apache.maven.plugins:maven-resources-plugin:3.3.1)</span></div><div class="row" style="left:2058px;top:1286px">site <span class="g">(org.apache.maven.plugins:maven-site-plugin:3.12.1)</span></div><div class="row" style="left:2058px;top:1334px">spring-boot <span class="g">(org.springframework.boot:spring-boot-maven-plugin:3.0.2)</span></div><div class="row" style="left:2058px;top:1382px">surefire <span class="g">(org.apache.maven.plugins:maven-surefire-plugin:3.2.2)</span></div><div class="row" style="left:2020px;top:1430px">Dependencies</div></div></div><svg class="abs" style="left:2825px;top:22px;overflow:visible" width="50" height="46" viewBox="0 0 50 46" >
      <path d="M10.8 10.2 C18 7, 34 6, 38.5 17 C41 24, 34 30, 24 30 C18 30, 15.5 26, 17.5 23 C19 21, 22 21.3, 23.5 21.7" stroke="#dcdee3" stroke-width="3" fill="none" stroke-linecap="round"/>
      <path d="M37 35.5 C30 39, 15 39, 10 30 C6 22, 12 15, 19.6 14.8 C26 14.6, 31 18, 29.5 23 C28.5 25, 26 25, 25 24.4" stroke="#dcdee3" stroke-width="3" fill="none" stroke-linecap="round"/></svg><svg class="abs" style="left:2832px;top:107px;overflow:visible" width="34" height="38" viewBox="0 0 34 38" >
      <ellipse cx="17" cy="7" rx="14.5" ry="5.2" stroke="#ced0d6" stroke-width="2.8" fill="none" stroke-linecap="round" stroke-linejoin="round"/>
      <path d="M2.5 7 V29 A14.5 5.2 0 0 0 31.5 29 V7" stroke="#ced0d6" stroke-width="2.8" fill="none" stroke-linecap="round" stroke-linejoin="round"/>
      <path d="M2.5 14.5 A14.5 5.2 0 0 0 31.5 14.5 M2.5 22 A14.5 5.2 0 0 0 31.5 22" stroke="#ced0d6" stroke-width="2.8" fill="none" stroke-linecap="round" stroke-linejoin="round"/></svg><div class="abs" style="left:2819px;top:175px;width:59px;height:60px;background:#43454a;border-radius:9px"></div><svg class="abs" style="left:2828px;top:190px;overflow:visible" width="42" height="30" viewBox="0 0 42 30" ><path d="M4.5 27 L9 6 M8.3 11 C11.5 3.5 23 2 21 9.5 L17.2 27 M20.5 10 C24 3.5 35.5 2 33.5 9.5 L29.7 27" stroke="#ced0d6" stroke-width="4.2" fill="none" stroke-linecap="round"/></svg><svg class="abs" style="left:2822px;top:258px;overflow:visible" width="54" height="54" viewBox="0 0 54 54" >
      <path d="M21.2 7.4 L28.3 7.8 L30 11.7 L41.7 12 L43.8 17.3 L46.6 31.8 L44.5 36.7 L39.9 36.7 L33.6 47 L26.9 47 L24 41.7 L10.6 41.3 L7.1 22.6 L10.2 16.6 L15.9 16.6 Z" fill="#d4d5da" stroke="#d4d5da" stroke-width="1.2" stroke-linejoin="round"/>
      <path d="M21.5 9.5 L21.5 19.8 L41.5 19.8" stroke="#2b2d30" stroke-width="3.2" fill="none"/>
      <path d="M12 18.5 L24.5 37.5 L14.5 38.5" stroke="#2b2d30" stroke-width="3.2" fill="none"/>
      <path d="M43.5 31 L38.5 24 L27 43.5" stroke="#2b2d30" stroke-width="3.2" fill="none"/></svg>
<svg class="abs" style="left:0;top:0" width="2885" height="1831" viewBox="0 0 2885 1831">
<path d="M456 1082 L1349 1086" stroke="#f20d0d" stroke-width="6.5" stroke-linecap="round" fill="none"/>
<path d="M1385 1062 L1975 1150" stroke="#f20d0d" stroke-width="7" stroke-linecap="round" fill="none"/>
<path d="M1969 1135 L2000 1158 L1963 1171 Z" fill="#f20d0d" stroke="#f20d0d" stroke-width="3" stroke-linejoin="round"/>
<path d="M2077 1191 L2426 1194" stroke="#f20d0d" stroke-width="7" stroke-linecap="round" fill="none"/>
</svg>
</body></html>
